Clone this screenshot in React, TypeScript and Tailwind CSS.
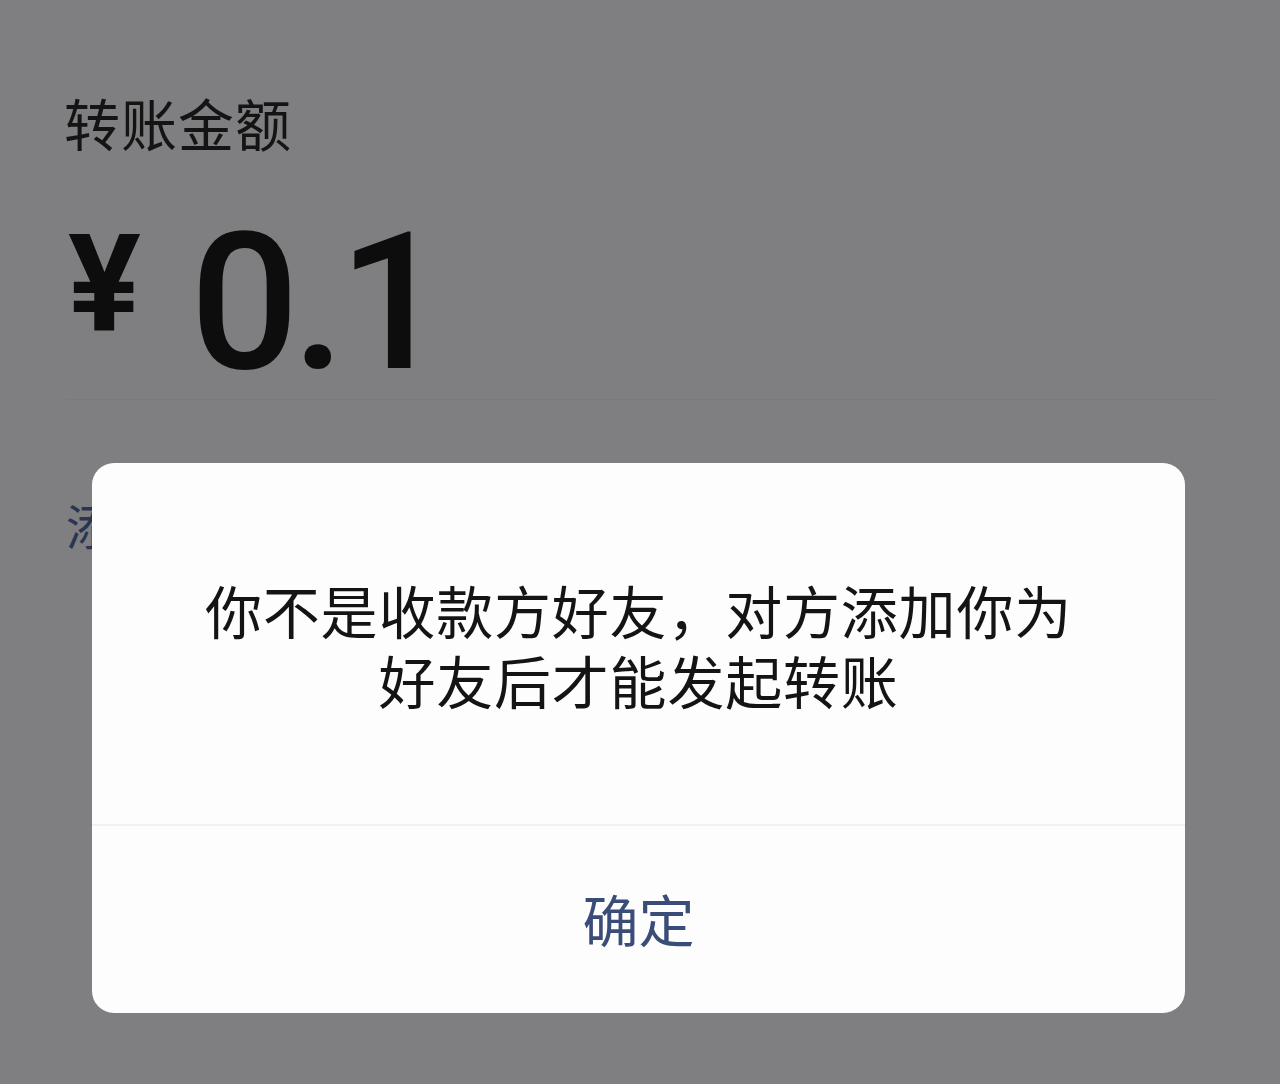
import React from "react";

export default function App() {
  return (
    <div
      className="relative w-[1280px] h-[1084px] overflow-hidden bg-[#7f7f81]"
      style={{ fontFamily: '"Noto Sans CJK SC", "Noto Sans", sans-serif' }}
    >
      <div className="pl-[66px] pr-[62px] pt-[84px]">
        <div className="text-[56px] leading-[76px] text-[#141414] tracking-[1px] -ml-[2px]">转账金额</div>
        <div
          className="mt-[79px] flex items-end h-[160px] text-[#0d0d0d]"
          style={{ fontFamily: 'Roboto, "Liberation Sans", sans-serif' }}
        >
          <span className="text-[136px] font-bold leading-none mb-[46px] ml-[2px]">¥</span>
          <span className="ml-[49px] text-[192px] font-medium leading-none tracking-[-7px]">0.1</span>
        </div>
        <div className="h-px bg-[#7a7a7d]" />
        <div className="mt-[92px] text-[48px] leading-[64px] text-[#2a3552]">添加转账说明</div>
      </div>

      <div className="absolute left-[92px] top-[463px] w-[1093px] h-[550px] rounded-[22px] bg-[#fdfdfe] flex flex-col">
        <div className="h-[361px] flex flex-col items-center justify-center text-[57px] leading-[70px] tracking-[0.8px] text-[#141414]">
          <div>你不是收款方好友，对方添加你为</div>
          <div>好友后才能发起转账</div>
        </div>
        <div className="h-[2px] bg-[#eff1f4]" />
        <div className="flex-1 flex items-center justify-center pb-[4px] text-[56px] text-[#3a4c78]">确定</div>
      </div>
    </div>
  );
}
